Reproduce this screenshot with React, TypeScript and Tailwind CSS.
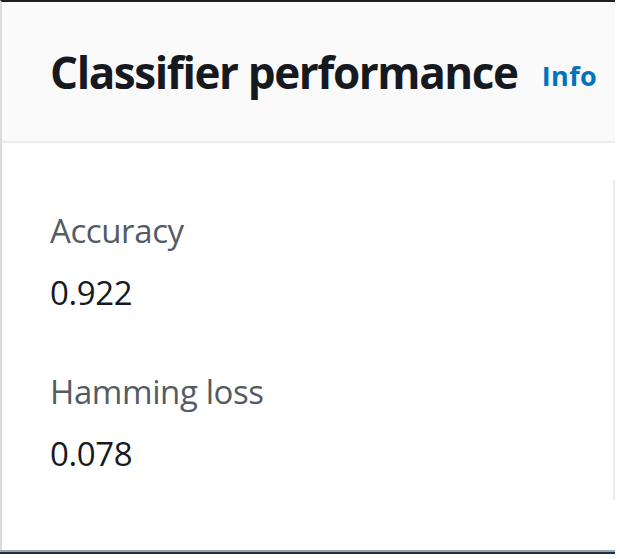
export default function App() {
  const metrics = [
    { label: 'Accuracy', value: '0.922' },
    { label: 'Hamming loss', value: '0.078' },
  ];

  return (
    <div className="w-[620px] h-[559px] bg-white overflow-hidden font-['Open_Sans',sans-serif]">
      <div className="w-[615px] h-[550px] border-t-2 border-[#1f1f1f] border-l-2 border-l-[#dcdcdc] flex flex-col">
        {/* Header */}
        <div className="h-[141px] shrink-0 bg-[#fafafa] border-b-2 border-[#eaeded] flex items-center pl-[48px]">
          <h2 className="text-[44px] font-bold text-[#16191f] tracking-[-1.4px]">Classifier performance</h2>
          <a className="ml-[24px] mt-[9px] text-[27px] font-bold text-[#0073bb] tracking-[0.4px]">Info</a>
        </div>

        {/* Body */}
        <div className="flex-1 pt-[37px]">
          <div className="h-[320px] border-r-2 border-[#eeeeee] pl-[48px] pt-[31px] flex flex-col gap-[59px]">
            {metrics.map((m) => (
              <div key={m.label} className="flex flex-col gap-[22px]">
                <div className="text-[33px] leading-[40px] text-[#545b64] tracking-[-0.4px]">{m.label}</div>
                <div className="text-[33px] leading-[40px] text-[#16191f] tracking-[-0.4px]">{m.value}</div>
              </div>
            ))}
          </div>
        </div>
      </div>
      <div className="w-[615px] h-[2px] bg-[#9aa3ab]" />
      <div className="w-[615px] h-[2px] bg-[#232f3e]" />
    </div>
  );
}
